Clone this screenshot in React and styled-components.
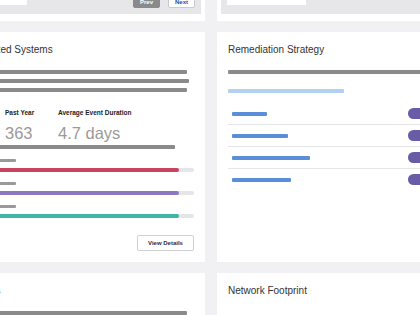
import React from 'react';
import styled, { createGlobalStyle } from 'styled-components';

const GlobalStyle = createGlobalStyle`
  html, body {
    margin: 0;
    padding: 0;
    background: #f1f1f4;
    overflow: hidden;
    font-family: "Liberation Sans", Arial, sans-serif;
  }
`;

const Page = styled.div`
  display: grid;
  grid-template-columns: 241px 230px;
  column-gap: 12px;
  row-gap: 11px;
  margin-left: -36px;
  margin-top: -20px;
`;

const TopCard = styled.div`
  background: #fff;
  padding: 4px 4px 7px;
`;

const Toolbar = styled.div`
  height: 30px;
  box-sizing: border-box;
  background: #e7e7ea;
  display: flex;
  align-items: flex-end;
  padding: 0 6px 6px;
`;

const Input = styled.div`
  width: ${p => p.$width}px;
  height: 20px;
  margin-bottom: 3px;
  background: #fff;
`;

const Pager = styled.div`
  margin-left: auto;
  display: flex;
  gap: 8px;
`;

const PageButton = styled.div`
  width: 27px;
  height: 18px;
  box-sizing: border-box;
  display: flex;
  align-items: flex-end;
  justify-content: center;
  padding-bottom: 2px;
  font-size: 6px;
  font-weight: 700;
  background: ${p => (p.$primary ? '#8a8a8a' : '#fff')};
  color: ${p => (p.$primary ? '#fff' : '#2f4c9c')};
  border: 1px solid ${p => (p.$primary ? '#8a8a8a' : '#c9c9cf')};
  border-radius: 2px;
`;

const Card = styled.div`
  background: #fff;
  padding: 11px;
  display: flex;
  flex-direction: column;
  min-height: 0;
`;

const Title = styled.div`
  font-size: 10px;
  line-height: 14px;
  color: #333;
  white-space: nowrap;
`;

const Bar = styled.div`
  height: 4px;
  width: ${p => p.$width};
  background: ${p => p.$color || '#8a8a8a'};
  margin-top: ${p => p.$top || 0}px;
  border-radius: 1px;
`;

const BarStack = styled.div`
  display: flex;
  flex-direction: column;
  gap: 5px;
  margin-top: 13px;
`;

const Stats = styled.div`
  display: grid;
  grid-template-columns: 30px 53px auto;
  margin-top: 17px;
`;

const Stat = styled.div`
  display: flex;
  flex-direction: column;
  gap: 7px;
  white-space: nowrap;
`;

const StatLabel = styled.div`
  font-size: 6.5px;
  line-height: 8px;
  font-weight: 700;
  color: #222;
`;

const StatValue = styled.div`
  font-size: 16.5px;
  line-height: 18px;
  color: #9a9a9a;
`;

const Meter = styled.div`
  margin-top: 10px;
  display: flex;
  flex-direction: column;
  gap: 6px;
`;

const MeterLabel = styled.div`
  width: 41px;
  height: 3px;
  background: #9a9a9a;
  border-radius: 1px;
`;

const Track = styled.div`
  height: 4px;
  background: #e6e6e9;
  border-radius: 2px;
  overflow: hidden;
`;

const Fill = styled.div`
  height: 100%;
  background: ${p => p.$color};
  border-radius: 2px;
`;

const DetailsButton = styled.div`
  align-self: flex-end;
  margin-top: 17px;
  width: 57px;
  height: 16px;
  box-sizing: border-box;
  border: 1px solid #cfcfd4;
  border-radius: 2px;
  display: flex;
  align-items: center;
  justify-content: center;
  font-size: 6px;
  font-weight: 700;
  color: #1f2d5a;
`;

const RowList = styled.div`
  margin-top: 10px;
  display: flex;
  flex-direction: column;
`;

const Row = styled.div`
  height: 21px;
  display: flex;
  align-items: center;
  justify-content: space-between;
  padding-left: 4px;
  border-bottom: 1px solid #e6e6e8;
  &:last-child {
    border-bottom: none;
  }
`;

const Pill = styled.div`
  width: 28px;
  height: 11px;
  border-radius: 6px;
  background: #6a5ba7;
`;

const meters = [
  { color: '#c8455e', pct: 93 },
  { color: '#8b78c1', pct: 93 },
  { color: '#3db5a7', pct: 93 },
];

const steps = [35, 56, 78, 59];

export default function App() {
  return (
    <>
      <GlobalStyle />
      <Page>
        <TopCard>
          <Toolbar>
            <Input $width={53} />
            <Pager>
              <PageButton $primary>Prev</PageButton>
              <PageButton>Next</PageButton>
            </Pager>
          </Toolbar>
        </TopCard>
        <TopCard>
          <Toolbar>
            <Input $width={79} />
          </Toolbar>
        </TopCard>

        <Card>
          <Title>Affected Systems</Title>
          <BarStack>
            <Bar $width="212px" />
            <Bar $width="214px" />
            <Bar $width="212px" />
          </BarStack>
          <Stats>
            <Stat>
              <StatLabel>Today</StatLabel>
              <StatValue>7</StatValue>
            </Stat>
            <Stat>
              <StatLabel>Past Year</StatLabel>
              <StatValue>363</StatValue>
            </Stat>
            <Stat>
              <StatLabel>Average Event Duration</StatLabel>
              <StatValue>4.7 days</StatValue>
            </Stat>
          </Stats>
          <Bar $width="200px" $top={3} />
          {meters.map((m, i) => (
            <Meter key={i}>
              <MeterLabel />
              <Track>
                <Fill $color={m.color} style={{ width: `${m.pct}%` }} />
              </Track>
            </Meter>
          ))}
          <DetailsButton>View Details</DetailsButton>
        </Card>

        <Card>
          <Title>Remediation Strategy</Title>
          <Bar $width="100%" $top={13} />
          <Bar $width="116px" $top={15} $color="#b3cff1" />
          <RowList>
            {steps.map((w, i) => (
              <Row key={i}>
                <Bar $width={`${w}px`} $color="#5b8ed8" />
                <Pill />
              </Row>
            ))}
          </RowList>
        </Card>

        <Card>
          <Title>Alerts</Title>
          <Bar $width="212px" $top={13} />
        </Card>
        <Card>
          <Title>Network Footprint</Title>
        </Card>
      </Page>
    </>
  );
}
